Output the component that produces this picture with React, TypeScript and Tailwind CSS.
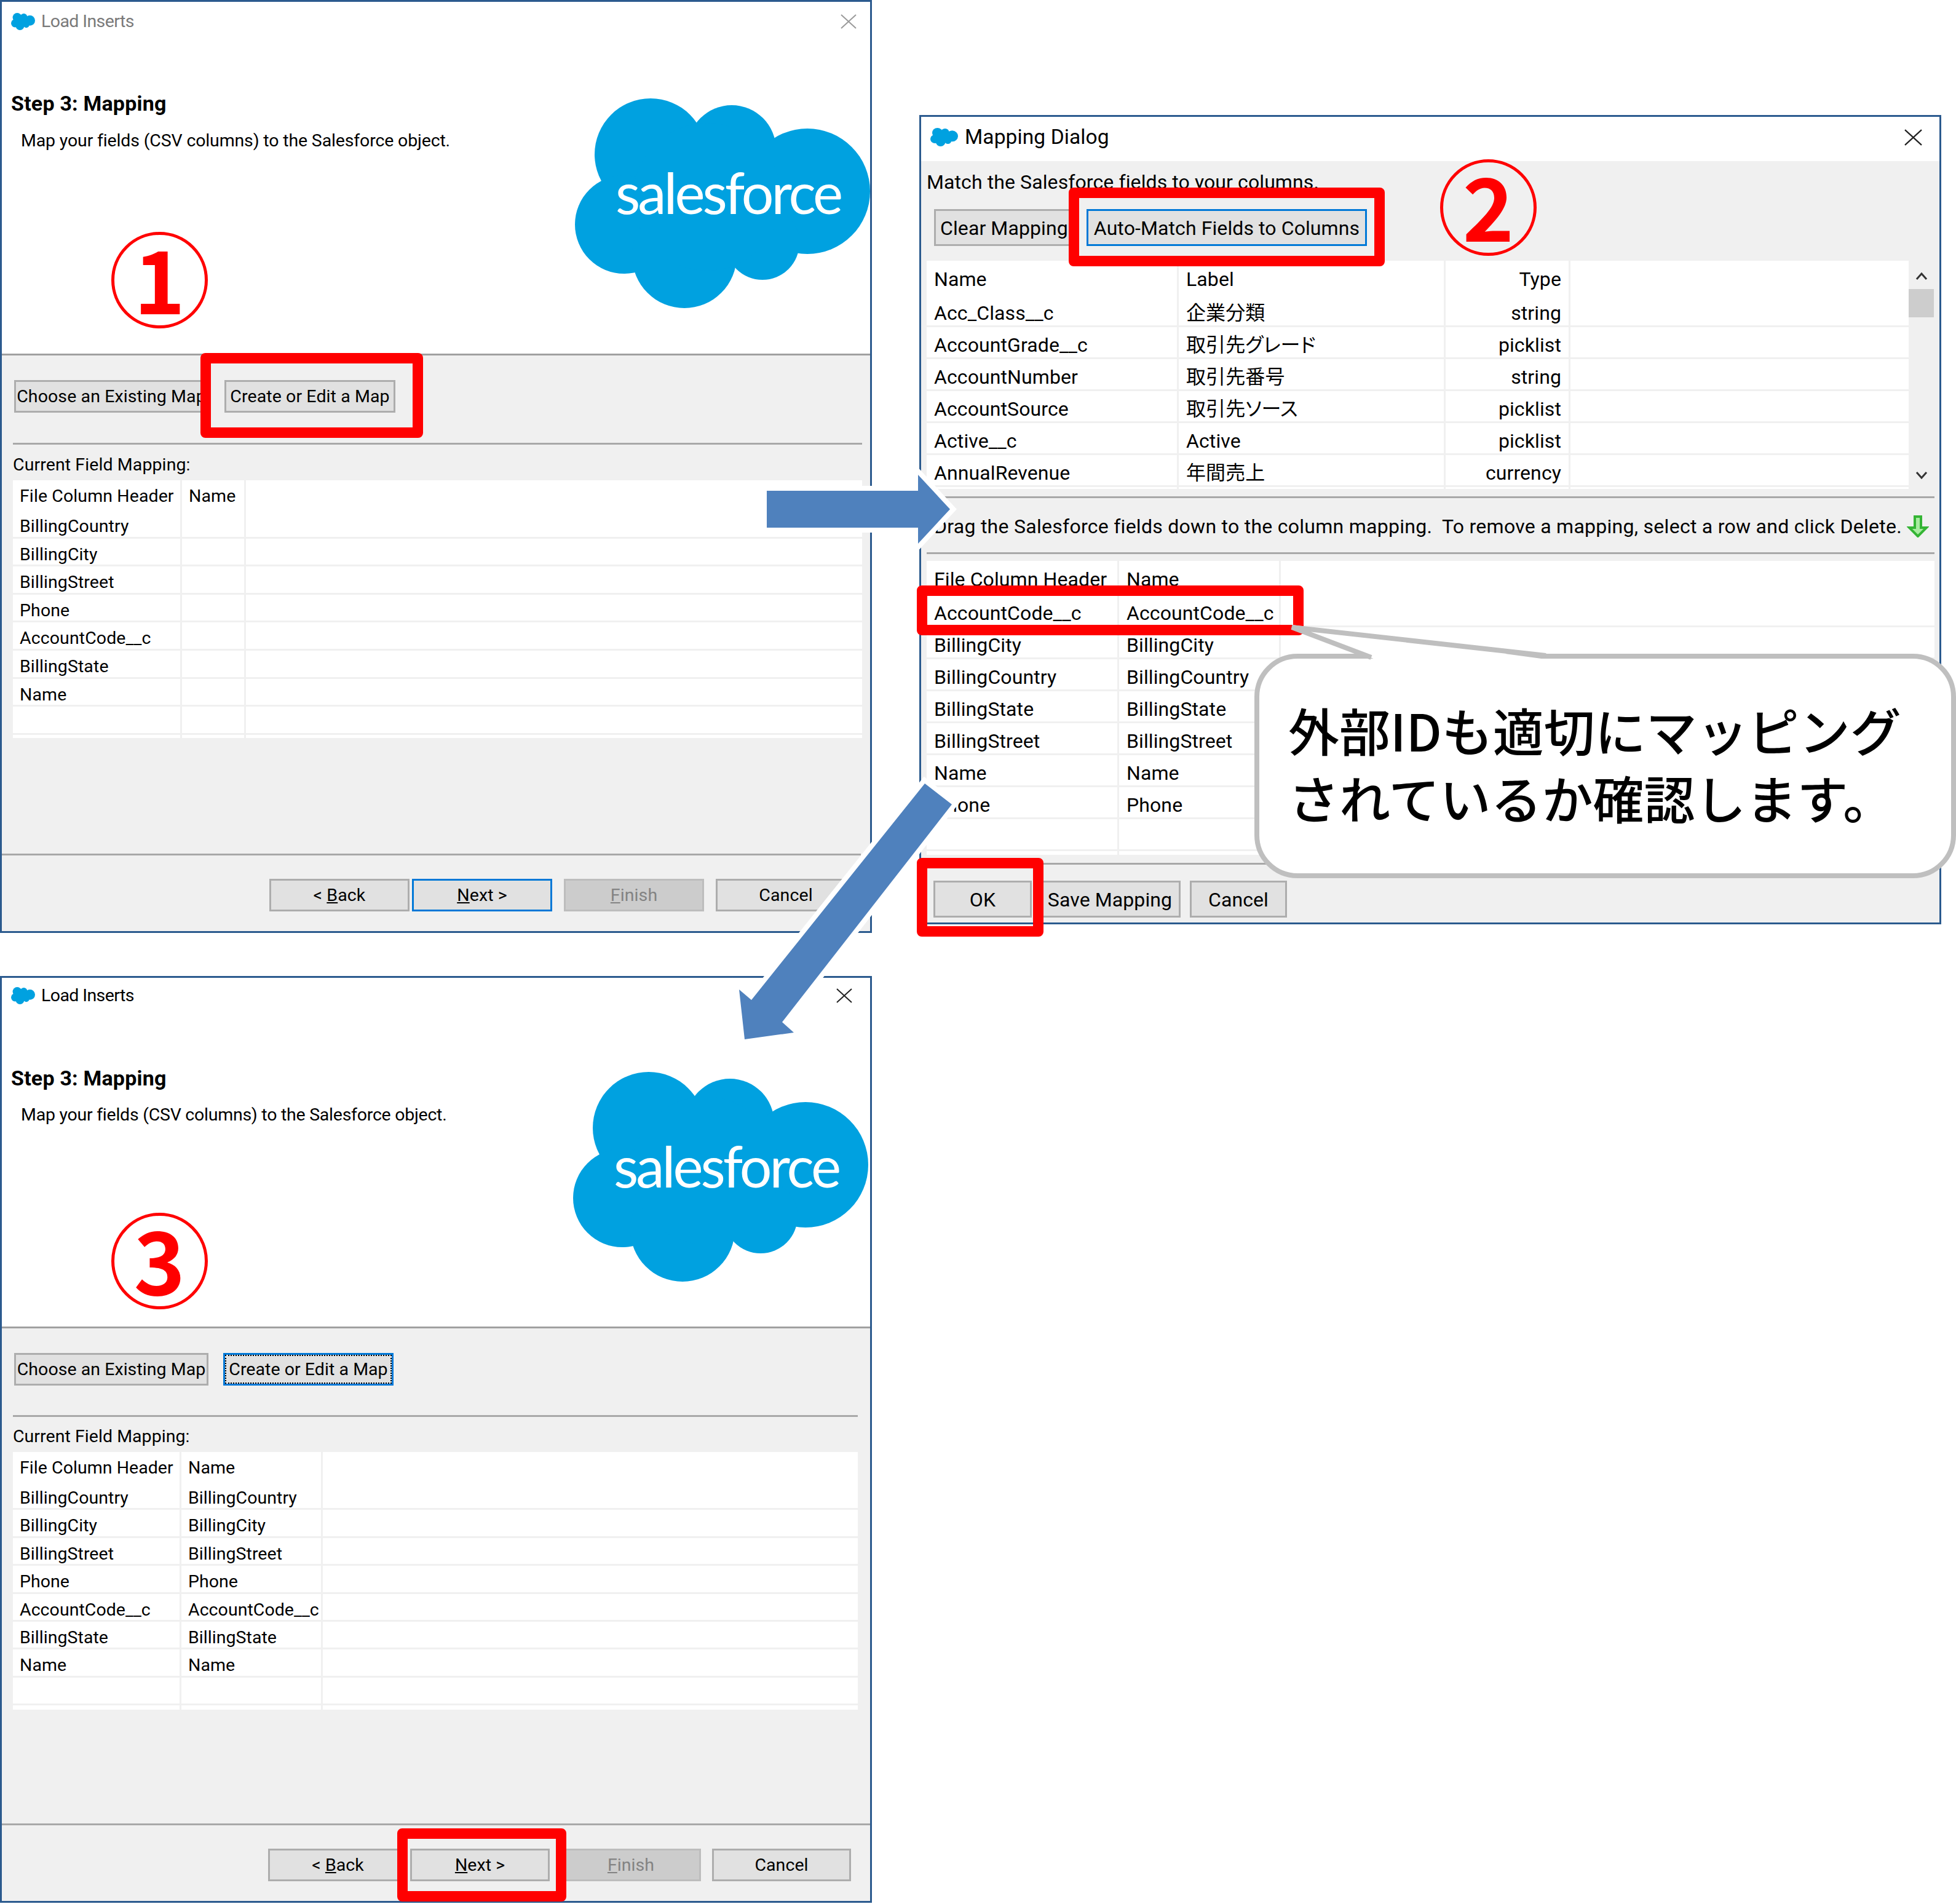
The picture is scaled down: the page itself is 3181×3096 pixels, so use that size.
import React from "react";

const CloudShape = () => (
  <>
    <circle cx="123" cy="91" r="91" />
    <circle cx="255" cy="83" r="72" />
    <circle cx="378" cy="151" r="102" />
    <circle cx="80" cy="205" r="80" />
    <circle cx="178" cy="256" r="85" />
    <circle cx="305" cy="235" r="60" />
    <circle cx="215" cy="160" r="120" />
  </>
);

const Cloud = ({ className }: { className: string }) => (
  <svg viewBox="0 0 480 341" className={className} preserveAspectRatio="none" fill="#00a1e0">
    <CloudShape />
  </svg>
);

const Logo = () => (
  <div className="relative w-[480px] h-[341px] shrink-0">
    <Cloud className="w-full h-full" />
    <span className="absolute left-[66px] top-[96px] text-[93px] leading-[112px] tracking-[-4px] text-white font-['Lato',sans-serif]">
      salesforce
    </span>
  </div>
);

const CloseX = ({ className }: { className: string }) => (
  <svg viewBox="0 0 26 24" className={`w-[26px] h-[24px] ${className}`} fill="none" stroke="currentColor" strokeWidth="2">
    <path d="M1 1 L25 23 M25 1 L1 23" />
  </svg>
);

const Btn = ({
  className,
  children,
}: {
  className: string;
  children: React.ReactNode;
}) => (
  <button className={`flex items-center justify-center shrink-0 border-[3px] bg-[#e1e1e1] text-black whitespace-nowrap pt-[2px] ${className}`}>
    {children}
  </button>
);

type TableProps = {
  grid: string;
  height: string;
  headH: string;
  rowH: string;
  head: string[];
  rows: string[][];
  cellPad: string;
  className?: string;
};

const DataTable = ({ grid, height, headH, rowH, head, rows, cellPad, className = "" }: TableProps) => (
  <div className={`bg-white overflow-hidden [font-feature-settings:'palt'] ${height} ${className}`}>
    <div className={`grid ${grid} ${headH}`}>
      {head.map((h, i) => (
        <div
          key={i}
          className={`flex items-center pt-[3px] ${cellPad} ${h === "Type" ? "justify-end" : ""} border-r-[3px] border-[#f0f0f0]`}
        >
          {h}
        </div>
      ))}
      <div />
    </div>
    {rows.map((r, i) => (
      <div key={i} className={`grid ${grid} ${rowH} border-b-[3px] border-[#f0f0f0]`}>
        {r.map((c, j) => (
          <div
            key={j}
            className={`flex items-center pt-[5px] whitespace-nowrap ${cellPad} ${head[j] === "Type" ? "justify-end" : ""} border-r-[3px] border-[#f0f0f0]`}
          >
            {c}
          </div>
        ))}
        <div />
      </div>
    ))}
    <div className={`grid ${grid} ${rowH}`}>
      {head.map((_, i) => (
        <div key={i} className="border-r-[3px] border-[#f0f0f0]" />
      ))}
    </div>
  </div>
);

const names = ["BillingCountry", "BillingCity", "BillingStreet", "Phone", "AccountCode__c", "BillingState", "Name"];

const Window1 = () => (
  <div className="absolute left-0 top-0 w-[1418px] h-[1517px] border-[3px] border-[#2b5a8e] bg-[#f0f0f0] flex flex-col text-[28.5px] tracking-[0.1px] text-black">
    <div className="h-[575px] shrink-0 bg-white border-b-[3px] border-[#a0a0a0] flex flex-col">
      <div className="h-[64px] flex items-center pl-[15px] pr-[22px] shrink-0">
        <Cloud className="w-[39px] h-[28px]" />
        <span className="ml-[10px] text-[#7a7a7a] tracking-[-0.6px]">Load Inserts</span>
        <CloseX className="ml-auto text-[#9a9a9a]" />
      </div>
      <div className="flex justify-between">
        <div className="pl-[15px] pt-[81px]">
          <div className="font-bold text-[34px] leading-[40px] tracking-[0.2px]">Step 3: Mapping</div>
          <div className="pl-[16px] mt-[21px] leading-[40px] tracking-[-0.15px]">Map your fields (CSV columns) to the Salesforce object.</div>
        </div>
        <div className="pt-[93px]">
          <Logo />
        </div>
      </div>
    </div>
    <div className="flex-1 flex flex-col pl-[18px] pr-[13px]">
      <div className="flex gap-[26px] mt-[40px] pl-[2px]">
        <Btn className="w-[316px] h-[53px] border-[#adadad]">Choose an Existing Map</Btn>
        <Btn className="w-[278px] h-[53px] border-[#adadad]">Create or Edit a Map</Btn>
      </div>
      <div className="h-[3px] bg-[#a8a8a8] mt-[49px]" />
      <div className="leading-[40px] mt-[13px]">Current Field Mapping:</div>
      <DataTable
        className="mt-[5px]"
        grid="grid-cols-[275px_104px_1fr]"
        height="h-[419px]"
        headH="h-[49px]"
        rowH="h-[45.6px]"
        cellPad="pl-[11px]"
        head={["File Column Header", "Name"]}
        rows={[...names.map((n) => [n, ""]), ["", ""]]}
      />
    </div>
    <div className="h-[126px] shrink-0 flex flex-col">
      <div className="h-[3px] bg-[#a8a8a8] mr-[15px]" />
      <div className="flex justify-end pr-[23px] pt-[38px]">
        <Btn className="w-[228px] h-[53px] border-[#adadad]">&lt;&nbsp;<span className="underline">B</span>ack</Btn>
        <Btn className="w-[228px] h-[53px] ml-[4px] border-[#0078d7]"><span className="underline">N</span>ext&nbsp;&gt;</Btn>
        <Btn className="w-[228px] h-[53px] ml-[19px] border-[#bdbdbd] !bg-[#cccccc] !text-[#838383]"><span className="underline">F</span>inish</Btn>
        <Btn className="w-[228px] h-[53px] ml-[19px] border-[#adadad]">Cancel</Btn>
      </div>
    </div>
  </div>
);

const Window3 = () => (
  <div className="absolute left-0 top-[1587px] w-[1418px] h-[1507px] border-[3px] border-[#2b5a8e] bg-[#f0f0f0] flex flex-col text-[28.5px] tracking-[0.05px] text-black">
    <div className="h-[570px] shrink-0 bg-white border-b-[3px] border-[#a0a0a0] flex flex-col">
      <div className="h-[58px] flex items-center pl-[15px] pr-[29px] shrink-0">
        <Cloud className="w-[39px] h-[28px]" />
        <span className="ml-[10px] tracking-[-0.6px]">Load Inserts</span>
        <CloseX className="ml-auto text-[#222222]" />
      </div>
      <div className="flex justify-between">
        <div className="pl-[15px] pt-[85px]">
          <div className="font-bold text-[34px] leading-[40px] tracking-[0.2px]">Step 3: Mapping</div>
          <div className="pl-[16px] mt-[20px] leading-[40px] tracking-[-0.25px]">Map your fields (CSV columns) to the Salesforce object.</div>
        </div>
        <div className="pt-[95px] pr-[3px]">
          <Logo />
        </div>
      </div>
    </div>
    <div className="flex-1 flex flex-col pl-[18px] pr-[20px]">
      <div className="flex gap-[24px] mt-[40px] pl-[2px]">
        <Btn className="w-[316px] h-[53px] border-[#adadad]">Choose an Existing Map</Btn>
        <Btn className="w-[277px] h-[53px] border-[#0078d7] outline-dotted outline-2 -outline-offset-[5px] outline-black">Create or Edit a Map</Btn>
      </div>
      <div className="h-[3px] bg-[#a8a8a8] mt-[48px]" />
      <div className="leading-[40px] mt-[12px]">Current Field Mapping:</div>
      <DataTable
        className="mt-[5px]"
        grid="grid-cols-[274px_230px_1fr]"
        height="h-[419px]"
        headH="h-[49px]"
        rowH="h-[45.4px]"
        cellPad="pl-[11px]"
        head={["File Column Header", "Name"]}
        rows={[...names.map((n) => [n, n]), ["", ""]]}
      />
    </div>
    <div className="h-[126px] shrink-0 flex flex-col">
      <div className="h-[3px] bg-[#a8a8a8]" />
      <div className="flex justify-end pr-[31px] pt-[38px]">
        <Btn className="w-[227px] h-[53px] border-[#adadad]">&lt;&nbsp;<span className="underline">B</span>ack</Btn>
        <Btn className="w-[227px] h-[53px] ml-[4px] border-[#adadad]"><span className="underline">N</span>ext&nbsp;&gt;</Btn>
        <Btn className="w-[228px] h-[53px] ml-[18px] border-[#bdbdbd] !bg-[#cccccc] !text-[#838383]"><span className="underline">F</span>inish</Btn>
        <Btn className="w-[226px] h-[53px] ml-[18px] border-[#adadad]">Cancel</Btn>
      </div>
    </div>
  </div>
);

const upper = [
  ["Acc_Class__c", "企業分類", "string"],
  ["AccountGrade__c", "取引先グレード", "picklist"],
  ["AccountNumber", "取引先番号", "string"],
  ["AccountSource", "取引先ソース", "picklist"],
  ["Active__c", "Active", "picklist"],
  ["AnnualRevenue", "年間売上", "currency"],
];

const lower = ["AccountCode__c", "BillingCity", "BillingCountry", "BillingState", "BillingStreet", "Name", "Phone"];

const Window2 = () => (
  <div className="absolute left-[1495px] top-[187px] w-[1662px] h-[1316px] border-[3px] border-[#2b5a8e] bg-[#f0f0f0] flex flex-col text-[32px] tracking-[0.1px] text-black">
    <div className="h-[72px] shrink-0 bg-white flex items-center pl-[15px] pr-[27px] pb-[6px]">
      <Cloud className="w-[45px] h-[30px]" />
      <span className="ml-[11px] text-[33.5px]">Mapping Dialog</span>
      <CloseX className="ml-auto w-[31px] h-[27px] text-[#222222]" />
    </div>
    <div className="flex flex-col pl-[9px] pr-[8px]">
      <div className="leading-[44px] mt-[12px]">Match the Salesforce fields to your columns.</div>
      <div className="flex gap-[12px] mt-[22px] pl-[12px]">
        <Btn className="w-[236px] h-[60px] border-[#adadad] !justify-start pl-[7px]">Clear Mapping</Btn>
        <Btn className="w-[456px] h-[60px] border-[#0078d7]">Auto-Match Fields to Columns</Btn>
      </div>
      <div className="flex mt-[24px]">
        <DataTable
          className="w-[1597px]"
          grid="grid-cols-[410px_434px_203px_1fr]"
          height="h-[371px]"
          headH="h-[56px]"
          rowH="h-[52px]"
          cellPad="px-[12px]"
          head={["Name", "Label", "Type"]}
          rows={upper}
        />
        <div className="w-[41px] flex flex-col items-center relative">
          <svg viewBox="0 0 20 12" className="w-[20px] h-[12px] mt-[19px]" fill="none" stroke="#333333" strokeWidth="3"><path d="M2 11 L10 2 L18 11" /></svg>
          <div className="w-full h-[46px] bg-[#cdcdcd] mt-[15px]" />
          <svg viewBox="0 0 20 12" className="w-[20px] h-[12px] mt-auto mb-[16px]" fill="none" stroke="#333333" strokeWidth="3"><path d="M2 1 L10 10 L18 1" /></svg>
        </div>
      </div>
      <div className="h-[3px] bg-[#a8a8a8] mt-[12px]" />
      <div className="flex items-center mt-[24px] h-[44px] pl-[12px] whitespace-pre tracking-[0.27px]">
        <span>Drag the Salesforce fields down to the column mapping.  To remove a mapping, select a row and click Delete.</span>
        <svg viewBox="0 0 36 36" className="w-[36px] h-[36px] ml-auto mr-[9px]" fill="#a8eca0" stroke="#35b535" strokeWidth="4">
          <path d="M13 2 H23 V20 H32 L18 34 L4 20 H13 Z" />
        </svg>
      </div>
      <div className="h-[3px] bg-[#a8a8a8] mt-[20px]" />
      <DataTable
        className="mt-[11px]"
        grid="grid-cols-[313px_263px_1fr]"
        height="h-[478px]"
        headH="h-[56px]"
        rowH="h-[52px]"
        cellPad="pl-[12px]"
        head={["File Column Header", "Name"]}
        rows={[...lower.map((n) => [n, n]), ["", ""]]}
      />
      <div className="h-[3px] bg-[#a8a8a8] mt-[13px]" />
      <div className="flex mt-[26px] pl-[11px]">
        <Btn className="w-[160px] h-[60px] border-[#adadad]">OK</Btn>
        <Btn className="w-[230px] h-[60px] ml-[12px] border-[#adadad]">Save Mapping</Btn>
        <Btn className="w-[158px] h-[60px] ml-[15px] border-[#adadad]">Cancel</Btn>
      </div>
    </div>
  </div>
);

const RedBox = ({ className }: { className: string }) => (
  <div className={`absolute border-[17px] border-[#ff0000] rounded-[8px] ${className}`} />
);

const Num = ({ className, children }: { className: string; children: React.ReactNode }) => (
  <div className={`absolute w-[157px] h-[157px] rounded-full border-[5px] border-[#ff0000] flex items-center justify-center pb-[13px] text-[#ff0000] font-bold text-[142px] leading-none font-['Noto_Sans_CJK_JP',sans-serif] ${className}`}>
    {children}
  </div>
);

export default function App() {
  return (
    <div className="relative w-[3181px] h-[3096px] bg-white overflow-hidden font-['Roboto','Noto_Sans_CJK_JP',sans-serif]">
      <Window1 />
      <Window2 />
      <Window3 />

      <Num className="left-[181px] top-[377px]">1</Num>
      <Num className="left-[2342px] top-[259px]">2</Num>
      <Num className="left-[181px] top-[1972px]">3</Num>

      <RedBox className="left-[326px] top-[574px] w-[362px] h-[138px]" />
      <RedBox className="left-[1738px] top-[305px] w-[514px] h-[128px]" />
      <RedBox className="left-[1491px] top-[952px] w-[629px] h-[81px]" />
      <RedBox className="left-[1491px] top-[1395px] w-[206px] h-[128px]" />
      <RedBox className="left-[646px] top-[2973px] w-[275px] h-[119px]" />

      <svg className="absolute left-0 top-0 w-[3181px] h-[3096px]" viewBox="0 0 3181 3096">
        <polygon
          points="1247,798 1493,798 1493,772 1545,828 1493,884 1493,858 1247,858"
          fill="#4f81bd"
          stroke="#ffffff"
          strokeWidth="16"
          paintOrder="stroke"
        />
        <polygon
          points="1504,1274 1548,1308 1272,1662 1291,1679 1211,1690 1202,1609 1222,1626"
          fill="#4f81bd"
          stroke="#ffffff"
          strokeWidth="16"
          paintOrder="stroke"
        />
      </svg>

      <div className="absolute left-[2040px] top-[1063px] w-[1141px] h-[365px] rounded-[70px] border-[8px] border-[#bfbfbf] bg-white pl-[47px] pt-[60px] text-[83px] leading-[110px] font-medium text-black whitespace-nowrap font-['Noto_Sans_CJK_JP',sans-serif]">
        <div>外部IDも適切にマッピング</div>
        <div>されているか確認します。</div>
      </div>
      <svg className="absolute left-0 top-0 w-[3181px] h-[3096px]" viewBox="0 0 3181 3096">
        <polygon points="2101,1016 2236,1072 2514,1072" fill="#ffffff" />
        <path d="M2230 1069 L2101 1020 L2514 1066" fill="none" stroke="#bfbfbf" strokeWidth="8" />
      </svg>
    </div>
  );
}
